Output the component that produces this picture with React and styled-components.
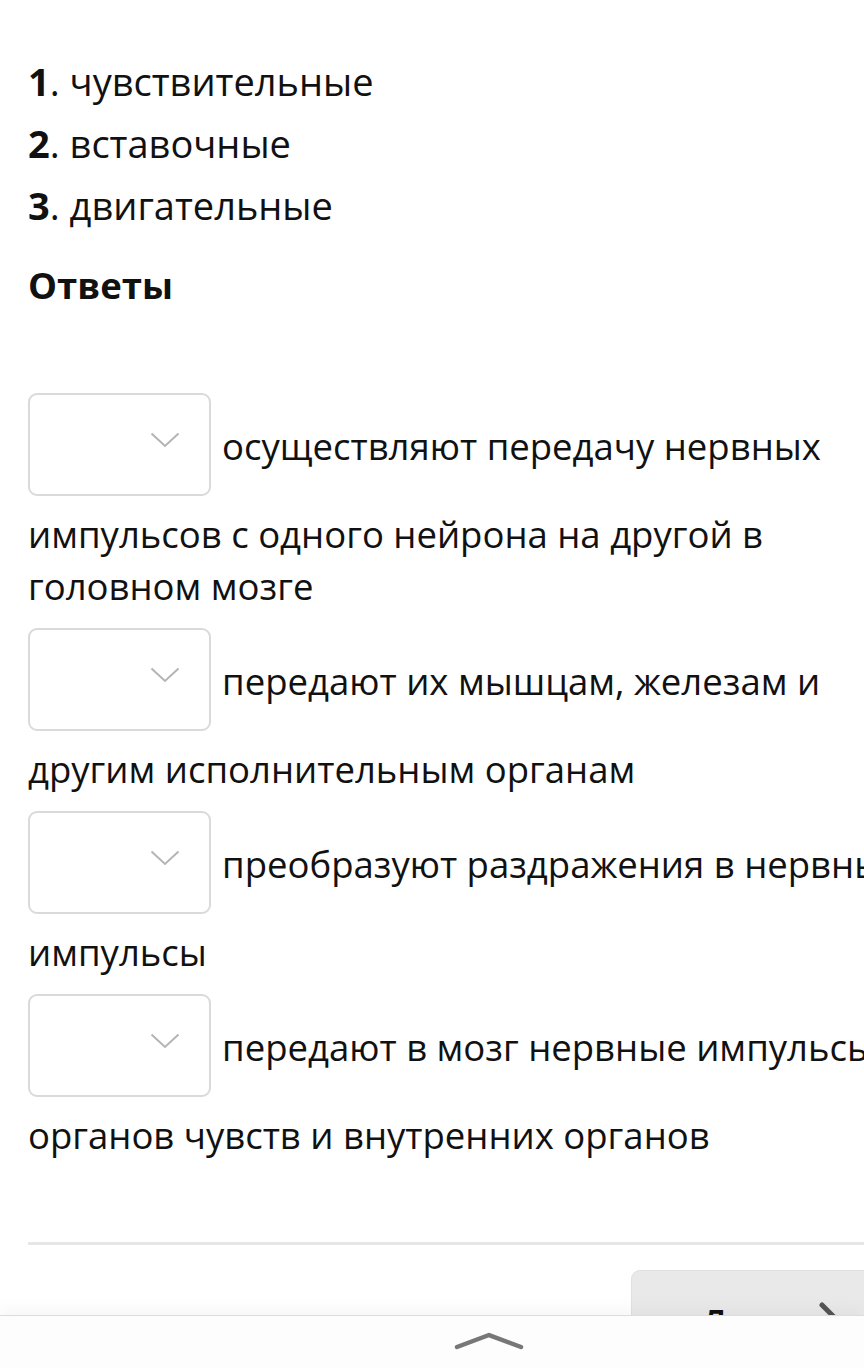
import React from "react";
import styled, { createGlobalStyle } from "styled-components";

const Global = createGlobalStyle`
  html, body { margin: 0; padding: 0; background: #fff; overflow-x: hidden; }
  body { font-family: "Open Sans", "Noto Sans", sans-serif; color: #111; }
`;

const Page = styled.div`
  width: 912px;
  padding: 50px 0 120px 28px;
`;

const List = styled.ol`
  list-style: none;
  margin: 0;
  padding: 0;
`;

const Item = styled.li`
  font-size: 38px;
  line-height: 62px;
  b { font-weight: 700; }
`;

const Heading = styled.h3`
  margin: 23px 0 82px;
  font-size: 36.5px;
  line-height: 52px;
  font-weight: 700;
`;

const Answer = styled.p`
  margin: 0 0 16px;
  font-size: 36.5px;
  line-height: 52px;
`;

const Select = styled.span`
  position: relative;
  display: inline-block;
  box-sizing: border-box;
  width: 183px;
  height: 103px;
  margin: 0 11px 12px 0;
  vertical-align: middle;
  border: 2.5px solid #dadada;
  border-radius: 9px;
  background: #fff;
  svg {
    position: absolute;
    right: 29px;
    top: 37px;
  }
`;

const Divider = styled.hr`
  border: none;
  height: 3px;
  background: #e6e6e6;
  margin: 81px 0 0;
`;

const Footer = styled.div`
  display: flex;
  justify-content: flex-end;
  padding: 25px 0 0 0;
`;

const NextButton = styled.button`
  position: relative;
  display: flex;
  align-items: flex-start;
  width: 309px;
  height: 100px;
  box-sizing: border-box;
  border: 1px solid #e0e0e0;
  border-radius: 9px;
  background: #e9e9e9;
  font-family: "Open Sans", sans-serif;
  font-size: 36px;
  line-height: normal;
  font-weight: 600;
  color: #111;
  text-align: left;
  padding: 27px 0 0 69px;
  svg {
    position: absolute;
    left: 187px;
    top: 31px;
  }
`;

const BottomBar = styled.div`
  position: fixed;
  left: 0;
  right: 0;
  bottom: 0;
  height: 53px;
  background: #fdfdfd;
  border-top: 1px solid #dcdcdc;
  box-shadow: 0 -8px 14px rgba(0, 0, 0, 0.03);
  display: flex;
  justify-content: center;
  align-items: flex-start;
  padding: 15px 0 0 114px;
  box-sizing: border-box;
`;

const Chevron = () => (
  <svg width="30" height="16" viewBox="0 0 30 16" fill="none">
    <path d="M1.5 1.5 L15 14 L28.5 1.5" stroke="#b4b4b4" strokeWidth="2" />
  </svg>
);

const answers = [
  "осуществляют передачу нервных импульсов с одного нейрона на другой в головном мозге",
  "передают их мышцам, железам и другим исполнительным органам",
  "преобразуют раздражения в нервные импульсы",
  "передают в мозг нервные импульсы от органов чувств и внутренних органов",
];

export default function App() {
  return (
    <>
      <Global />
      <Page>
        <List>
          <Item><b>1</b>. чувствительные</Item>
          <Item><b>2</b>. вставочные</Item>
          <Item><b>3</b>. двигательные</Item>
        </List>
        <Heading>Ответы</Heading>
        {answers.map((a) => (
          <Answer key={a}>
            <Select><Chevron /></Select>
            {a}
          </Answer>
        ))}
        <Divider />
        <Footer>
          <NextButton>
            Далее
            <svg width="30" height="50" viewBox="0 0 30 50" fill="none">
              <path d="M3 3 L25 25 L3 47" stroke="#555" strokeWidth="5" strokeLinecap="round" />
            </svg>
          </NextButton>
        </Footer>
      </Page>
      <BottomBar>
        <svg width="70" height="20" viewBox="0 0 70 20" fill="none">
          <path d="M3 16 L35 4 L67 16" stroke="#777" strokeWidth="4.5" strokeLinecap="round" strokeLinejoin="round" />
        </svg>
      </BottomBar>
    </>
  );
}
